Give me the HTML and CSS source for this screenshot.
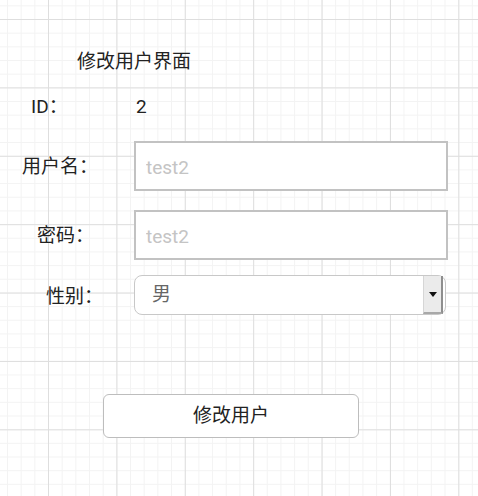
FILE: index.html
```html
<!DOCTYPE html>
<html lang="zh-CN">
<head>
<meta charset="utf-8">
<title>修改用户界面</title>
<link rel="stylesheet" href="styles.css">
</head>
<body>
<main class="page">
  <h1 class="title">修改用户界面</h1>
  <div class="row row-id">
    <span class="label label-id">ID：</span>
    <span class="value">2</span>
  </div>
  <div class="row row-user">
    <label class="label label-user" for="username">用户名：</label>
    <input class="field" id="username" type="text" placeholder="test2">
  </div>
  <div class="row row-pass">
    <label class="label label-pass" for="password">密码：</label>
    <input class="field" id="password" type="text" placeholder="test2">
  </div>
  <div class="row row-sex">
    <label class="label label-sex" for="sex">性别：</label>
    <div class="select-wrap">
      <select class="select" id="sex">
        <option>男</option>
        <option>女</option>
      </select>
      <span class="select-btn"><span class="arrow"></span></span>
    </div>
  </div>
  <div class="actions">
    <button class="btn" type="button">修改用户</button>
  </div>
</main>
</body>
</html>
```
FILE: styles.css
```css
html, body {
  margin: 0;
  padding: 0;
  height: 100%;
}
body {
  background-color: #ffffff;
  background-image:
    linear-gradient(to right, #dedede 1px, transparent 1px),
    linear-gradient(to bottom, #dedede 1px, transparent 1px),
    linear-gradient(to right, #f3f3f3 1px, transparent 1px),
    linear-gradient(to bottom, #f3f3f3 1px, transparent 1px);
  background-size: 68.4px 68.4px, 68.4px 68.4px, 13.68px 13.68px, 13.68px 13.68px;
  background-position: 48px 19px;
  font-family: "Roboto", "Noto Sans CJK SC", sans-serif;
  font-size: 19px;
  line-height: 26px;
  color: #222;
}
.page {
  display: flex;
  flex-direction: column;
  padding-top: 49px;
}
.title {
  margin: 0 0 0 77px;
  font-size: 19px;
  font-weight: normal;
  line-height: 26px;
  color: #222;
}
.row {
  display: flex;
  align-items: center;
}
.label {
  box-sizing: border-box;
  width: 134px;
  flex: none;
  color: #222;
  padding-top: 2px;
}
.label-id { padding-left: 31px; padding-top: 0; }
.label-user { padding-left: 22px; }
.label-pass { padding-left: 37px; }
.label-sex { padding-left: 46px; padding-top: 3px; }
.row-id { margin-top: 19px; }
.value { padding-left: 2px; }
.row-user { margin-top: 21px; }
.row-pass { margin-top: 19px; }
.row-sex { margin-top: 15px; }
.field {
  box-sizing: border-box;
  width: 314px;
  height: 50px;
  border: 2px solid #c2c2c2;
  border-radius: 0;
  padding: 2px 10px 0;
  font: inherit;
  color: #222;
  background: #fff;
  outline: none;
}
.field::placeholder {
  color: #c4c4c4;
}
.select-wrap {
  position: relative;
  width: 312px;
  height: 40px;
}
.select {
  -webkit-appearance: none;
  appearance: none;
  box-sizing: border-box;
  width: 100%;
  height: 100%;
  border: 1px solid #c8c8c8;
  border-radius: 8px;
  padding: 0 0 0 17px;
  font: inherit;
  color: #666;
  background: #fff;
  outline: none;
}
.select-btn {
  position: absolute;
  top: 1px;
  right: 3px;
  bottom: 1px;
  width: 20px;
  box-sizing: border-box;
  background: #ebebeb;
  border-left: 1px solid #d6d6d6;
  border-right: 2px solid #8e8e8e;
  border-bottom: 2px solid #a8a8a8;
  display: flex;
  align-items: center;
  justify-content: center;
  pointer-events: none;
}
.arrow {
  width: 0;
  height: 0;
  border-left: 4px solid transparent;
  border-right: 4px solid transparent;
  border-top: 5px solid #111;
}
.actions {
  margin-top: 79px;
  padding-left: 103px;
}
.btn {
  box-sizing: border-box;
  width: 256px;
  height: 44px;
  border: 1px solid #bdbdbd;
  border-radius: 6px;
  background: #fff;
  font: inherit;
  color: #222;
  padding: 0;
}
```
